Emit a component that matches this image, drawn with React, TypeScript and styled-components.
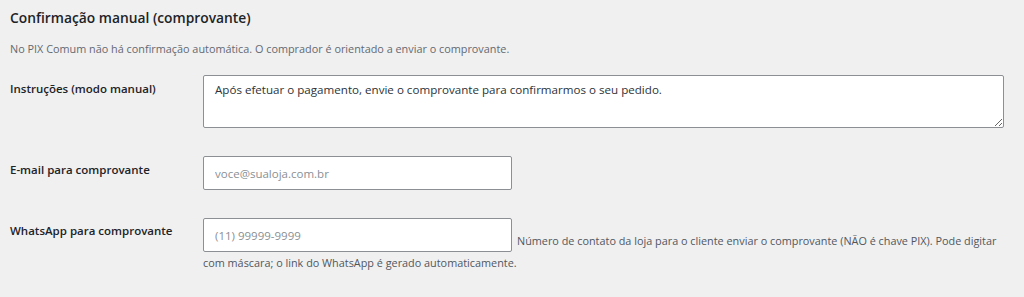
import React from "react";
import styled, { createGlobalStyle } from "styled-components";

const GlobalStyle = createGlobalStyle`
  html, body {
    margin: 0;
    padding: 0;
    background: #f0f0f1;
  }
  body {
    font-family: "Open Sans", "Noto Sans", "Liberation Sans", sans-serif;
    color: #1d2327;
  }
`;

const Page = styled.div`
  width: 1024px;
  height: 297px;
  padding: 0 20px 0 10px;
  box-sizing: border-box;
  overflow: hidden;
`;

const Heading = styled.h2`
  margin: 0;
  padding-top: 8px;
  font-size: 13.8px;
  line-height: 20px;
  font-weight: 600;
  color: #1d2327;
`;

const Intro = styled.p`
  margin: 13px 0 0;
  font-size: 10.85px;
  line-height: 16px;
  color: #646970;
`;

const FormTable = styled.div`
  display: flex;
  flex-direction: column;
  gap: 28px;
  margin-top: 18px;
`;

const Row = styled.div`
  display: grid;
  grid-template-columns: 193px 1fr;
  align-items: start;
`;

const Label = styled.label<{ offset: number }>`
  padding-top: ${p => p.offset}px;
  font-size: 11.5px;
  line-height: 16px;
  font-weight: 600;
  color: #1d2327;
`;

const Field = styled.div`
  font-size: 10.85px;
  line-height: 22px;
  color: #50575e;
`;

const TextArea = styled.textarea`
  display: block;
  width: 801px;
  height: 53px;
  box-sizing: border-box;
  padding: 6px 11px;
  border: 1px solid #8c8f94;
  border-radius: 2px;
  background: #fff;
  font-family: inherit;
  font-size: 11.6px;
  line-height: 16px;
  color: #2c3338;
  resize: vertical;
  outline: none;
`;

const TextInput = styled.input<{ inline?: boolean }>`
  width: 309px;
  height: 34px;
  box-sizing: border-box;
  padding: 0 11px;
  border: 1px solid #8c8f94;
  border-radius: 2px;
  background: #fff;
  font-family: inherit;
  font-size: 11.5px;
  color: #2c3338;
  vertical-align: ${p => (p.inline ? "bottom" : "middle")};
  outline: none;

  &::placeholder {
    color: #8a8f94;
  }
`;

const Help = styled.span`
  margin-left: 5px;
  color: #50575e;
`;

export default function App() {
  return (
    <Page>
      <GlobalStyle />
      <Heading>Confirmação manual (comprovante)</Heading>
      <Intro>No PIX Comum não há confirmação automática. O comprador é orientado a enviar o comprovante.</Intro>
      <FormTable>
        <Row>
          <Label offset={6}>Instruções (modo manual)</Label>
          <div>
            <TextArea defaultValue="Após efetuar o pagamento, envie o comprovante para confirmarmos o seu pedido." />
          </div>
        </Row>
        <Row>
          <Label offset={6}>E-mail para comprovante</Label>
          <div>
            <TextInput type="email" placeholder="voce@sualoja.com.br" />
          </div>
        </Row>
        <Row>
          <Label offset={5}>WhatsApp para comprovante</Label>
          <Field>
            <TextInput inline type="text" placeholder="(11) 99999-9999" />
            <Help>
              Número de contato da loja para o cliente enviar o comprovante (NÃO é chave PIX). Pode digitar com máscara; o link do WhatsApp é gerado automaticamente.
            </Help>
          </Field>
        </Row>
      </FormTable>
    </Page>
  );
}
